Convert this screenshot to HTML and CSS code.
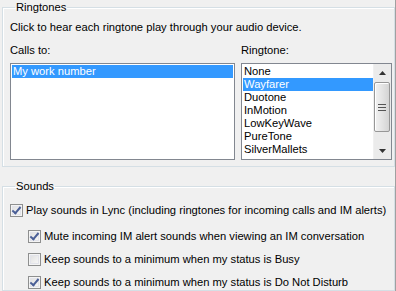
FILE: index.html
```html
<!DOCTYPE html>
<html>
<head>
<meta charset="utf-8">
<link rel="stylesheet" href="styles.css">
</head>
<body>
<div class="window">
  <fieldset class="group ringtones">
    <legend class="group-title">Ringtones</legend>
    <p class="desc">Click to hear each ringtone play through your audio device.</p>
    <div class="lists">
      <div class="col">
        <div class="label">Calls to:</div>
        <div class="listbox calls">
          <div class="item selected">My work number</div>
        </div>
      </div>
      <div class="col">
        <div class="label">Ringtone:</div>
        <div class="listbox tones">
          <div class="items">
            <div class="item">None</div>
            <div class="item selected">Wayfarer</div>
            <div class="item">Duotone</div>
            <div class="item">InMotion</div>
            <div class="item">LowKeyWave</div>
            <div class="item">PureTone</div>
            <div class="item">SilverMallets</div>
          </div>
          <div class="scrollbar">
            <div class="arrow up"><svg width="7" height="4" viewBox="0 0 7 4"><path d="M3.5 0 L7 4 L0 4 Z" fill="#333"/></svg></div>
            <div class="track">
              <div class="thumb">
                <svg width="8" height="7" viewBox="0 0 8 7"><path d="M0 0.5H8M0 3.5H8M0 6.5H8" stroke="#555" stroke-width="1"/></svg>
              </div>
            </div>
            <div class="arrow down"><svg width="7" height="4" viewBox="0 0 7 4"><path d="M0 0 L7 0 L3.5 4 Z" fill="#333"/></svg></div>
          </div>
        </div>
      </div>
    </div>
  </fieldset>

  <fieldset class="group sounds">
    <legend class="group-title">Sounds</legend>
    <label class="check top">
      <span class="box checked"></span>
      <span>Play sounds in Lync (including ringtones for incoming calls and IM alerts)</span>
    </label>
    <div class="sub">
      <label class="check">
        <span class="box checked"></span>
        <span>Mute incoming IM alert sounds when viewing an IM conversation</span>
      </label>
      <label class="check">
        <span class="box"></span>
        <span>Keep sounds to a minimum when my status is Busy</span>
      </label>
      <label class="check">
        <span class="box checked"></span>
        <span>Keep sounds to a minimum when my status is Do Not Disturb</span>
      </label>
    </div>
  </fieldset>
</div>
</body>
</html>
```
FILE: styles.css
```css
html, body {
  margin: 0;
  padding: 0;
  background: #f0f0f0;
}
body {
  font-family: "Liberation Sans", Arial, sans-serif;
  font-size: 11.2px;
  color: #000;
}
.window {
  width: 396px;
  height: 291px;
  box-sizing: border-box;
  border-right: 1px solid #a0a0a0;
  overflow: hidden;
}
.group {
  margin: 0 0 0 2px;
  border: 1px solid #d5dfe5;
  box-shadow: inset 1px 1px 0 #fff;
  padding: 0;
  min-width: 0;
}
.group-title {
  margin-left: 5px;
  padding: 0 1px;
  line-height: 14px;
}
.ringtones {
  height: 167px;
  box-sizing: border-box;
  padding: 0 2px 0 7px;
}
.desc {
  margin: 6px 0 0 0;
  line-height: 15px;
}
.lists {
  display: grid;
  grid-template-columns: 225px 151px;
  column-gap: 6px;
  margin-top: 8px;
}
.label {
  line-height: 15px;
  margin-bottom: 5px;
}
.listbox {
  height: 97px;
  box-sizing: border-box;
  border: 1px solid #828790;
  background: #fff;
  padding: 1px;
  overflow: hidden;
}
.item {
  height: 13px;
  line-height: 13px;
  padding-left: 1px;
  white-space: nowrap;
}
.item.selected {
  background: #3399ff;
  color: #fff;
}
.tones {
  display: flex;
  padding: 0;
}
.tones .items {
  flex: 1;
  padding: 1px 0 0 1px;
}
.scrollbar {
  width: 17px;
  display: flex;
  flex-direction: column;
  background: #ebebeb;
  border-left: 1px solid #f0f0f0;
}
.arrow {
  height: 17px;
  display: flex;
  align-items: center;
  justify-content: center;
}
.arrow svg { display: block; }
.track {
  flex: 1;
  padding-top: 1px;
}
.thumb {
  height: 50px;
  margin: 0 1px 0 0;
  box-sizing: border-box;
  border: 1px solid #979797;
  border-radius: 2px;
  background: linear-gradient(to right, #f2f2f2, #e4e4e4 50%, #d4d4d4);
  box-shadow: inset 1px 1px 0 #fff;
  display: flex;
  align-items: center;
  justify-content: center;
}
.thumb svg { display: block; }

.sounds {
  margin-top: 12px;
  height: 112px;
  box-sizing: border-box;
  padding: 0 0 0 7px;
}
.check {
  display: flex;
  align-items: center;
  gap: 3px;
  line-height: 15px;
  white-space: nowrap;
}
.check.top {
  margin-top: 10px;
}
.sub {
  display: flex;
  flex-direction: column;
  gap: 8px;
  padding-left: 18px;
  margin-top: 11px;
}
.box {
  width: 13px;
  height: 13px;
  box-sizing: border-box;
  border: 1px solid #8e8f8f;
  background: linear-gradient(135deg, #dcdcdc, #fbfbfb);
  box-shadow: inset 0 0 0 1px #f4f4f4, inset 0 0 0 2px #e2e3ea;
  flex: none;
  position: relative;
}
.box.checked::after {
  content: "";
  position: absolute;
  left: 3px;
  top: 0px;
  width: 3px;
  height: 7px;
  border-right: 2px solid #4a5f97;
  border-bottom: 2px solid #4a5f97;
  transform: rotate(40deg);
}
```
